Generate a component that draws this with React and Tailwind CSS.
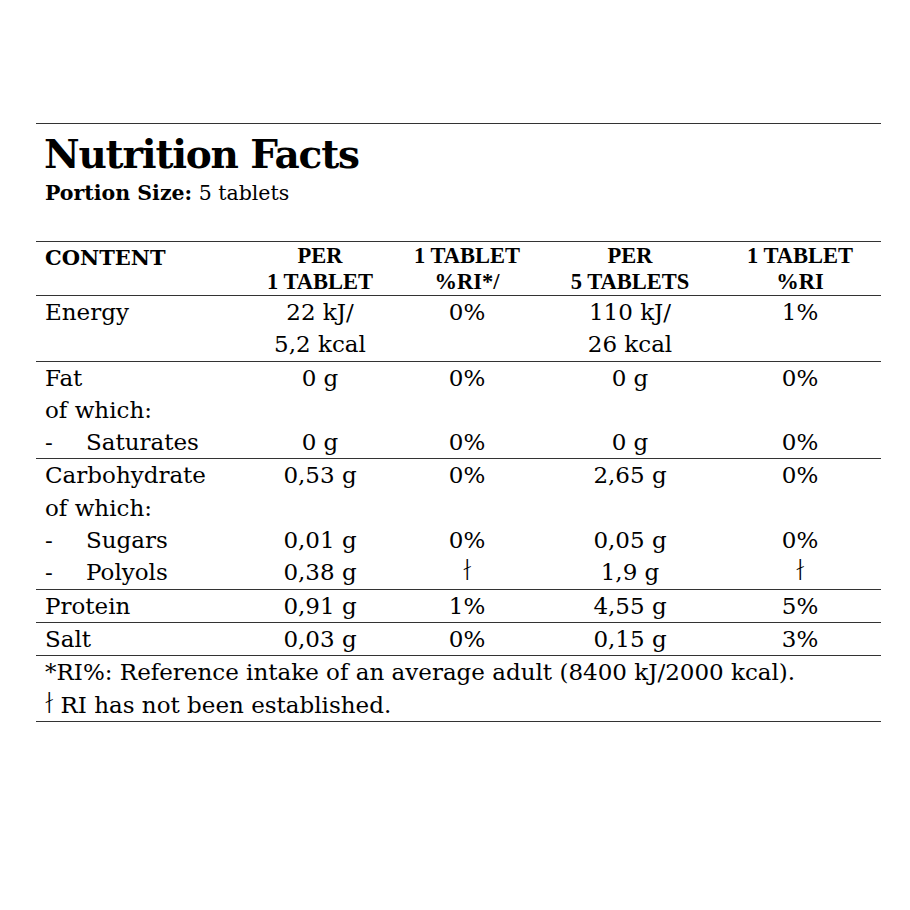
const serif = "font-['DejaVu_Serif',serif]";

const rows = [
  {
    lines: [
      ["Energy", "22 kJ/", "0%", "110 kJ/", "1%"],
      ["", "5,2 kcal", "", "26 kcal", ""],
    ],
  },
  {
    lines: [
      ["Fat", "0 g", "0%", "0 g", "0%"],
      ["of which:", "", "", "", ""],
      ["-Saturates", "0 g", "0%", "0 g", "0%"],
    ],
  },
  {
    lines: [
      ["Carbohydrate", "0,53 g", "0%", "2,65 g", "0%"],
      ["of which:", "", "", "", ""],
      ["-Sugars", "0,01 g", "0%", "0,05 g", "0%"],
      ["-Polyols", "0,38 g", "ł", "1,9 g", "ł"],
    ],
  },
  { lines: [["Protein", "0,91 g", "1%", "4,55 g", "5%"]] },
  { lines: [["Salt", "0,03 g", "0%", "0,15 g", "3%"]] },
];

function NotSet() {
  return (
    <span className="inline-block font-['Lato',sans-serif] font-light text-[29px] leading-[0]">ł</span>
  );
}

function Label({ text }) {
  if (text.startsWith("-")) {
    return (
      <div className="flex">
        <span className="w-[41px]">-</span>
        <span>{text.slice(1)}</span>
      </div>
    );
  }
  return <span>{text}</span>;
}

function Line({ cells }) {
  return (
    <div className="grid grid-cols-[211px_146px_148px_178px_162px] h-[32.3px] leading-[32.3px]">
      <div className="pl-[9px] whitespace-nowrap">
        <Label text={cells[0]} />
      </div>
      {cells.slice(1).map((c, i) => (
        <div key={i} className="text-center whitespace-nowrap">
          {c === "ł" ? <NotSet /> : c}
        </div>
      ))}
    </div>
  );
}

export default function App() {
  return (
    <div className={`w-[910px] h-[910px] bg-white text-black ${serif}`}>
      <div className="pt-[123px] pl-[36px] w-[881px]">
        <div className="border-t border-[#333]">
          <h1 className="pl-[8px] pt-[6px] text-[39px] font-bold leading-[48px] tracking-[-1.2px]">
            Nutrition Facts
          </h1>
          <p className="pl-[9px] pt-[2px] text-[20.5px] leading-[26px]">
            <span className="font-bold">Portion Size:</span> 5 tablets
          </p>
        </div>

        <div className="mt-[35px] border-t border-[#333] text-[23px]">
          <div className="grid grid-cols-[211px_146px_148px_178px_162px] border-b border-[#333] pt-[1px] leading-[26px]">
            <div className="pl-[9px] pt-[2px] text-[21px] font-bold">CONTENT</div>
            {[
              ["PER", "1 TABLET"],
              ["1 TABLET", "%RI*/"],
              ["PER", "5 TABLETS"],
              ["1 TABLET", "%RI"],
            ].map(([a, b], i) => (
              <div key={i} className="text-center font-['Liberation_Serif',serif] text-[22.5px] font-bold">
                <div>{a}</div>
                <div>{b}</div>
              </div>
            ))}
          </div>

          {rows.map((r, i) => (
            <div key={i} className="border-b border-[#333]">
              {r.lines.map((cells, j) => (
                <Line key={j} cells={cells} />
              ))}
            </div>
          ))}

          <div className="border-b border-[#333] pl-[9px] leading-[32.3px] whitespace-nowrap">
            <p>*RI%: Reference intake of an average adult (8400 kJ/2000 kcal).</p>
            <p className="h-[32.3px]">
              <NotSet /> RI has not been established.
            </p>
          </div>
        </div>
      </div>
    </div>
  );
}
